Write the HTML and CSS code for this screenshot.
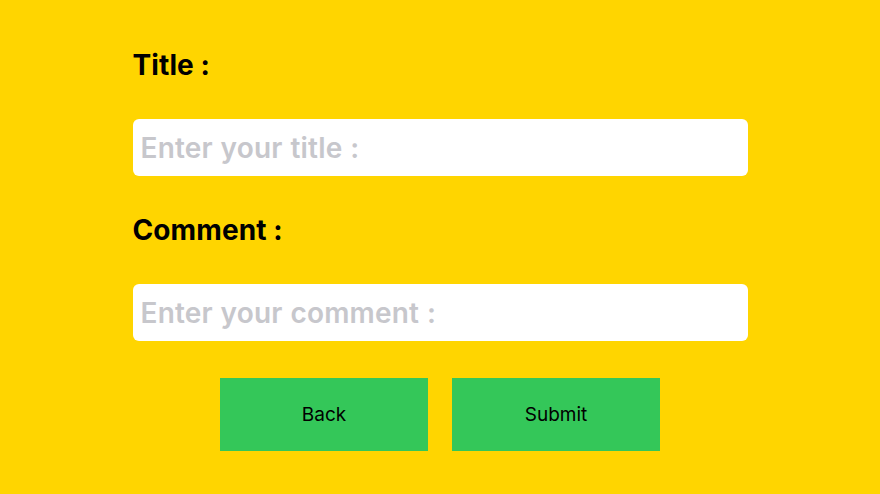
FILE: index.html
```html
<!DOCTYPE html>
<html>
<head>
<meta charset="utf-8">
<link rel="stylesheet" href="styles.css">
</head>
<body>
<div class="form">
  <label class="label">Title :</label>
  <input class="field" type="text" placeholder="Enter your title :">
  <label class="label">Comment :</label>
  <input class="field" type="text" placeholder="Enter your comment :">
  <div class="actions">
    <button class="btn">Back</button>
    <button class="btn">Submit</button>
  </div>
</div>
</body>
</html>
```
FILE: styles.css
```css
html, body {
  margin: 0;
  padding: 0;
  background: #FFD500;
  height: 100%;
}
body {
  font-family: Inter, "Noto Sans", sans-serif;
}
.form {
  width: 615px;
  margin: 0 auto;
  padding-top: 50px;
  display: flex;
  flex-direction: column;
}
.label {
  display: block;
  height: 31px;
  line-height: 31px;
  font-size: 28px;
  font-weight: 700;
  color: #000;
  letter-spacing: 0.1px;
  margin-bottom: 38px;
}
.field {
  box-sizing: border-box;
  height: 57px;
  border: none;
  border-radius: 6px;
  background: #fff;
  padding: 0 0 0 8px;
  font-family: Inter, "Noto Sans", sans-serif;
  font-size: 28px;
  font-weight: 600;
  color: #000;
  outline: none;
  margin-bottom: 39px;
}
.field::placeholder {
  color: #C7C7CC;
  letter-spacing: 0.2px;
  word-spacing: 0.5px;
}
.actions {
  display: flex;
  justify-content: center;
  gap: 24px;
  margin-top: -2px;
}
.btn {
  width: 208px;
  height: 73px;
  border: none;
  border-radius: 0;
  background: #34C759;
  color: #000;
  font-family: Inter, "Noto Sans", sans-serif;
  font-size: 19px;
  font-weight: 400;
  padding: 0;
}
```
